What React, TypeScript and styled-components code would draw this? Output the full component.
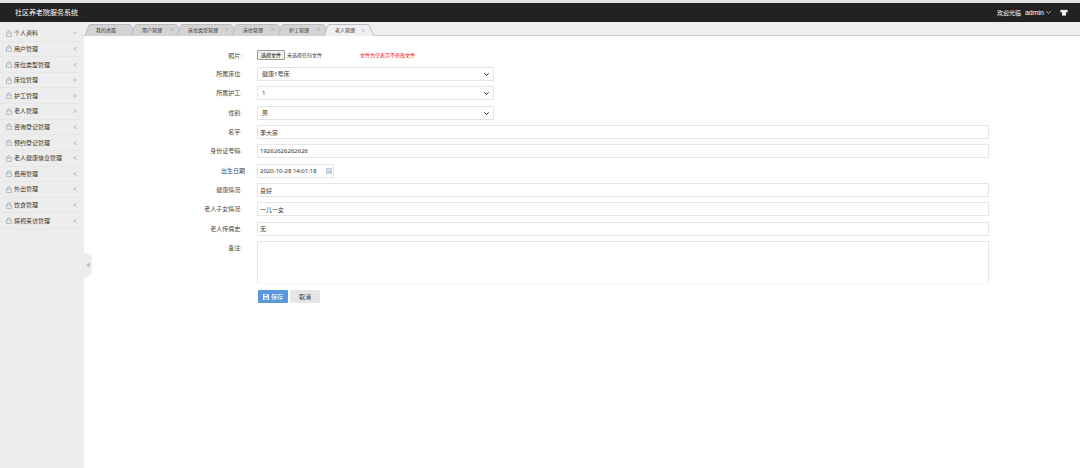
import React from "react";
import styled, { createGlobalStyle } from "styled-components";

const Global = createGlobalStyle`
  * { box-sizing: border-box; }
  body { margin: 0; background: #fff; color: #333; font: 6px/8px "Liberation Sans", "Noto Sans CJK SC", sans-serif; }
  input, select, textarea, button { font: inherit; color: inherit; margin: 0; }
`;

const Page = styled.div`
  min-height: 100vh;
  display: flex;
  flex-direction: column;
`;
const Header = styled.header`
  height: 22px;
  border-top: 3px solid #e2e4e4;
  background: #222;
  color: #fff;
  display: flex;
  align-items: center;
  justify-content: space-between;
  padding: 0 12px 0 15px;
`;
const Brand = styled.h1`
  margin: 0;
  font-size: 7px;
  font-weight: 400;
`;
const UserArea = styled.div`
  display: flex;
  align-items: center;
  gap: 4px;
`;
const UserButton = styled.button`
  display: flex;
  align-items: center;
  gap: 2px;
  padding: 0;
  border: 0;
  background: none;
  color: #fff;
  font-size: 7px;
`;
const SkinButton = styled(UserButton)`
  margin-left: 5px;
`;
const Body = styled.div`
  flex: 1;
  display: flex;
`;
const Sidebar = styled.nav`
  position: relative;
  width: 84px;
  flex: none;
  padding-top: 4px;
  background: #ededed;
`;
const Menu = styled.ul`
  list-style: none;
  margin: 0;
  padding: 0;
  height: 203px;
  display: grid;
  grid-auto-rows: 1fr;
`;
const MenuItem = styled.li`
  border-bottom: 1px solid #e6e6e6;
  display: grid;
`;
const MenuLink = styled.a`
  display: flex;
  align-items: center;
  gap: 2px;
  padding: 0 7px 0 6px;
  color: #333;
  text-decoration: none;
  span { flex: 1; }
`;
const Collapse = styled.button`
  position: absolute;
  left: 100%;
  top: 230px;
  width: 8px;
  height: 26px;
  padding: 0;
  border: 0;
  background: none;
  svg { display: block; }
`;
const Main = styled.main`
  flex: 1;
  min-width: 0;
`;
const Tabs = styled.div`
  height: 14px;
  padding: 2px 0 0 1px;
  display: flex;
  background: #efeff1;
  border-bottom: 1px solid #ccc;
`;
const Tab = styled.button<{ $w: number; $active?: boolean }>`
  position: relative;
  width: ${(p) => p.$w}px;
  height: ${(p) => (p.$active ? 12 : 11)}px;
  margin-right: -5px;
  padding: 0 9px 0 11px;
  border: 0;
  background: none;
  display: flex;
  align-items: center;
  justify-content: space-between;
  font-size: 5px;
  z-index: ${(p) => (p.$active ? 1 : 0)};
  > svg:first-child { position: absolute; inset: 0; z-index: -1; }
`;
const Form = styled.form`
  padding: 13px 91px 0 0;
  display: grid;
  grid-template-columns: 158px 1fr;
  column-gap: 15px;
`;
const Fields = styled.div`
  grid-column: 1 / -1;
  display: grid;
  grid-template-columns: subgrid;
  grid-auto-rows: 1fr;
  height: 174px;
`;
const Label = styled.label<{ $flush?: boolean }>`
  text-align: right;
  color: #444;
  padding-top: 3px;
  margin-right: ${(p) => (p.$flush ? -3 : 0)}px;
`;
const Control = styled.input`
  width: 100%;
  height: 14px;
  padding: 0 2px;
  border: 1px solid #e6e6e6;
  background: #fff;
  font-family: "Noto Sans", "Noto Sans CJK SC", sans-serif;
`;
const SelectWrap = styled.div`
  position: relative;
  width: 237px;
  height: 14px;
  svg { position: absolute; right: 5px; top: 5px; pointer-events: none; }
`;
const Select = styled.select`
  width: 100%;
  height: 14px;
  padding: 0 4px;
  appearance: none;
  border: 1px solid #e4e4e4;
  border-radius: 0;
  background: #fff;
  font-family: "Noto Sans", "Noto Sans CJK SC", sans-serif;
`;
const DateWrap = styled.div`
  position: relative;
  width: 77px;
  height: 14px;
  svg { position: absolute; right: 2px; top: 4px; }
`;
const FileRow = styled.div`
  height: 18px;
  padding-top: 1px;
  display: flex;
  align-items: flex-start;
  font-size: 5px;
`;
const FilePicker = styled.label`
  display: flex;
  align-items: center;
  gap: 2px;
  input { position: absolute; width: 1px; height: 1px; opacity: 0; }
`;
const FileButton = styled.span`
  padding: 0 3px;
  border: 1px solid #999;
  border-radius: 1px;
  background: #efefef;
  color: #000;
`;
const Hint = styled.span`
  margin: 1px 0 0 38px;
  color: #f00;
`;
const Area = styled.textarea`
  display: block;
  width: 100%;
  height: 43px;
  padding: 2px;
  border: 1px solid #e6e6e6;
  border-bottom-color: #f6f6f6;
  resize: none;
`;
const Actions = styled.div`
  grid-column: 2;
  display: flex;
  gap: 2px;
  padding: 6px 0 0 1px;
`;
const Button = styled.button<{ $primary?: boolean }>`
  width: 30px;
  height: 13px;
  padding: 0;
  display: flex;
  align-items: center;
  justify-content: center;
  gap: 2px;
  border: 0;
  border-radius: 1px;
  background: ${(p) => (p.$primary ? "#5a98de" : "#e6e6e6")};
  color: ${(p) => (p.$primary ? "#fff" : "#333")};
`;

const Lock = () => (
  <svg width="6" height="7" viewBox="0 0 6 7" fill="none" stroke="#a4adb8" strokeWidth=".8">
    <path d="M.5 3h5v3.4h-5zM1.6 3V2a1.4 1.4 0 0 1 2.8 0v1" />
  </svg>
);
const Chevron = ({ d, color = "#a0a0a0", w = 4, s = 0.6 }: { d: "left" | "right" | "down"; color?: string; w?: number; s?: number }) => (
  <svg width={w} height={w} viewBox="0 0 4 4" fill="none" stroke={color} strokeWidth={s}>
    <path d={{ left: "M3.6.4.8 2l2.8 1.6", right: "M.4.4 3.2 2 .4 3.6", down: "M.3 1 2 2.8 3.7 1" }[d]} />
  </svg>
);
const TabShape = ({ w, active }: { w: number; active?: boolean }) => (
  <svg width={w} height="12" viewBox={`0 0 ${w} 12`}>
    <path
      d={`M0 12 3.5 2.2Q4 .5 6 .5H${w - 7}Q${w - 5} .5 ${w - 4.3} 2.2L${w} 12`}
      fill={active ? "#efeff1" : "#d3d3d4"}
      stroke="#b2b2b2"
      strokeWidth=".8"
    />
  </svg>
);

const menu = ["个人资料", "用户管理", "床位类型管理", "床位管理", "护工管理", "老人管理", "咨询登记管理", "预约登记管理", "老人健康信息管理", "费用管理", "外出管理", "饮食管理", "探视来访管理"];
const tabs: [string, number][] = [["我的桌面", 51], ["用户管理", 51], ["床位类型管理", 60], ["床位管理", 51], ["护工管理", 51], ["老人管理", 50]];
const selects = [["bed", "所属床位:", "健康1号床"], ["nurse", "所属护工:", "1"], ["gender", "性别:", "男"]];
const before = [["name", "名字:", "李大宗"], ["idcard", "身份证号码:", "19262626262626"]];
const after = [["health", "健康情况:", "良好"], ["children", "老人子女情况:", "一儿一女"], ["history", "老人传病史:", "无"]];

const TextRow = ({ row: [id, label, value] }: { row: string[] }) => (
  <>
    <Label htmlFor={id}>{label}</Label>
    <Control id={id} defaultValue={value} />
  </>
);

export default function App() {
  return (
    <Page>
      <Global />
      <Header>
        <Brand>社区养老院服务系统</Brand>
        <UserArea>
          <span>欢迎光临</span>
          <UserButton type="button">admin <Chevron d="down" color="#ddd" w={5} /></UserButton>
          <SkinButton type="button" aria-label="换肤">
            <svg width="8" height="7" viewBox="0 0 8 7" fill="#fff"><path d="M2.6.5Q4 1.8 5.4.5L8 1.8 7.2 3.6 6 3.1v3.4H2V3.1L.8 3.6 0 1.8z" /></svg>
          </SkinButton>
        </UserArea>
      </Header>
      <Body>
        <Sidebar>
          <Menu>
            {menu.map((m, i) => (
              <MenuItem key={m}>
                <MenuLink href="#"><Lock /><span>{m}</span><Chevron d={i === 0 ? "down" : i === 5 ? "right" : "left"} /></MenuLink>
              </MenuItem>
            ))}
          </Menu>
          <Collapse type="button" aria-label="收起菜单">
            <svg width="8" height="26" viewBox="0 0 8 26"><path d="M0 0 6.5 3Q8 4 8 5V21Q8 22 6.5 23L0 26z" fill="#ededed" /><path d="M5.5 10.5v5L2.5 13z" fill="#b0b0b0" /></svg>
          </Collapse>
        </Sidebar>
        <Main>
          <Tabs>
            {tabs.map(([t, w], i) => (
              <Tab key={t} type="button" $w={w} $active={i === 5}>
                <TabShape w={w} active={i === 5} />
                <span>{t}</span>
                {i > 0 && <svg width="3" height="3" viewBox="0 0 3 3" stroke="#999" strokeWidth=".6"><path d="m.3.3 2.4 2.4m0-2.4L.3 2.7" /></svg>}
              </Tab>
            ))}
          </Tabs>
          <Form>
            <Label htmlFor="photo">照片:</Label>
            <FileRow>
              <FilePicker>
                <input id="photo" type="file" />
                <FileButton>选择文件</FileButton>
                <span>未选择任何文件</span>
              </FilePicker>
              <Hint>文件为空表示不修改文件</Hint>
            </FileRow>
            <Fields>
              {selects.map(([id, label, value]) => (
                <React.Fragment key={id}>
                  <Label htmlFor={id}>{label}</Label>
                  <SelectWrap>
                    <Select id={id}><option>{value}</option></Select>
                    <Chevron d="down" color="#333" w={5} s={0.8} />
                  </SelectWrap>
                </React.Fragment>
              ))}
              {before.map((r) => <TextRow key={r[0]} row={r} />)}
              <Label htmlFor="birth" $flush>出生日期</Label>
              <DateWrap>
                <Control id="birth" defaultValue="2020-10-28 14:01:18" />
                <svg width="6" height="6" viewBox="0 0 6 6"><path d="M.5.5h5v5h-5z" fill="#eef3fb" stroke="#9fb4d4" strokeWidth=".7" /><path d="M1 2h4M1 3.7h4M2.3 2v3" stroke="#9fb4d4" strokeWidth=".5" /><path d="M3.5 3h1.5v1.5H3.5z" fill="#d99" /></svg>
              </DateWrap>
              {after.map((r) => <TextRow key={r[0]} row={r} />)}
            </Fields>
            <Label htmlFor="remark">备注:</Label>
            <Area id="remark" />
            <Actions>
              <Button type="submit" $primary>
                <svg width="6" height="6" viewBox="0 0 6 6"><path fill="#fff" fillRule="evenodd" d="M0 0h4.8L6 1.2V6H0zM1.3.6v1.5h2.8V.6zM1.2 3.4v2h3.6v-2z" /></svg>
                保存
              </Button>
              <Button type="button">取消</Button>
            </Actions>
          </Form>
        </Main>
      </Body>
    </Page>
  );
}
